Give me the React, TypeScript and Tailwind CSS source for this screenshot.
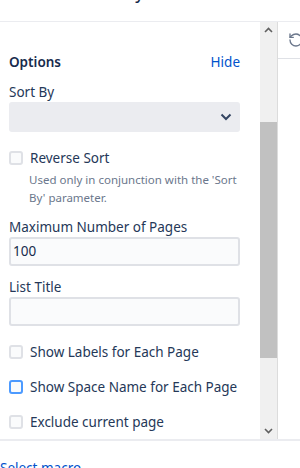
import React from 'react';
import { RotateCcw } from 'lucide-react';

const FONT = "font-['Noto_Sans','Open_Sans',sans-serif]";

const Checkbox: React.FC<{ label: string; focused?: boolean }> = ({ label, focused }) => (
  <label className="flex items-center h-5 gap-[7px] text-[13.5px] whitespace-nowrap">
    <span
      className={
        'w-[14px] h-[14px] shrink-0 rounded-[3px] border-2 bg-[#fafbfc] ' +
        (focused ? 'border-[#4c9aff]' : 'border-[#dfe1e6]')
      }
    />
    <span className="text-[#253858]">{label}</span>
  </label>
);

const TextInput: React.FC<{ value?: string }> = ({ value }) => (
  <div className="h-[29px] w-[231px] rounded-[3px] border-2 border-[#dfe1e6] bg-[#fafbfc] px-[2px] flex items-center text-[13.5px] text-[#172b4d]">
    {value}
  </div>
);

const Scrollbar: React.FC = () => (
  <div className="w-[17px] bg-[#f0f0f0] flex flex-col items-center">
    <svg width="9" height="6" viewBox="0 0 9 6" className="mt-[5px]">
      <path d="M1 5 L4.5 1.5 L8 5" stroke="#606060" strokeWidth="1.6" fill="none" />
    </svg>
    <div className="mt-[89px] h-[236px] w-full bg-[#c1c1c1]" />
    <div className="flex-1" />
    <svg width="9" height="6" viewBox="0 0 9 6" className="mb-[5px]">
      <path d="M1 1 L4.5 4.5 L8 1" stroke="#606060" strokeWidth="1.6" fill="none" />
    </svg>
  </div>
);

export default function App() {
  return (
    <div className={`w-[300px] h-[468px] bg-white overflow-hidden flex flex-col ${FONT}`}>
      <div className="h-[21px] shrink-0 overflow-hidden relative">
        <div className="absolute left-[60px] top-[-17px] text-[16px] leading-5 text-[#172b4d] font-medium">
          Content by
        </div>
      </div>
      <div className="h-[1px] shrink-0 bg-[#ebecf0]" />
      <div className="h-[417px] shrink-0 flex">
        <div className="w-[260px] overflow-hidden pt-[30px] pl-[9px] pr-[20px]">
          <div className="flex items-center justify-between h-5">
            <span className="text-[13.5px] font-semibold text-[#172b4d]">Options</span>
            <span className="text-[13.5px] text-[#0052cc]">Hide</span>
          </div>
          <div className="mt-[10px] h-5 leading-5 text-[13.5px] text-[#253858]">Sort By</div>
          <div className="h-[30px] rounded-[3px] bg-[#ebecf0] flex items-center justify-end pr-[8px]">
            <svg width="12" height="8" viewBox="0 0 12 8">
              <path d="M1.5 1.5 L6 6 L10.5 1.5" stroke="#344563" strokeWidth="2" fill="none" />
            </svg>
          </div>
          <div className="mt-[16px]">
            <Checkbox label="Reverse Sort" />
          </div>
          <p className="mt-[3px] pl-[20px] -mr-[8px] text-[11.5px] leading-[18px] text-[#6b778c]">
            Used only in conjunction with the 'Sort By' parameter.
          </p>
          <div className="mt-[10px] h-5 leading-5 text-[13.5px] text-[#253858]">Maximum Number of Pages</div>
          <TextInput value="100" />
          <div className="mt-[11px] h-5 leading-5 text-[13.5px] text-[#253858]">List Title</div>
          <TextInput />
          <div className="mt-[16px]">
            <Checkbox label="Show Labels for Each Page" />
          </div>
          <div className="mt-[15px]">
            <Checkbox label="Show Space Name for Each Page" focused />
          </div>
          <div className="mt-[15px]">
            <Checkbox label="Exclude current page" />
          </div>
        </div>
        <Scrollbar />
        <div className="flex-1 border-l border-[#dcdcdc] flex flex-col overflow-hidden">
          <div className="h-[37px] border-b border-[#dfe1e6] pl-[10px] pt-[10px]">
            <RotateCcw size={16} color="#6b778c" strokeWidth={2} />
          </div>
        </div>
      </div>
      <div className="h-[2px] shrink-0 bg-[#ebecf0]" />
      <div className="shrink-0 pt-[17px] text-[13.5px] text-[#0052cc] leading-5">Select macro</div>
    </div>
  );
}
